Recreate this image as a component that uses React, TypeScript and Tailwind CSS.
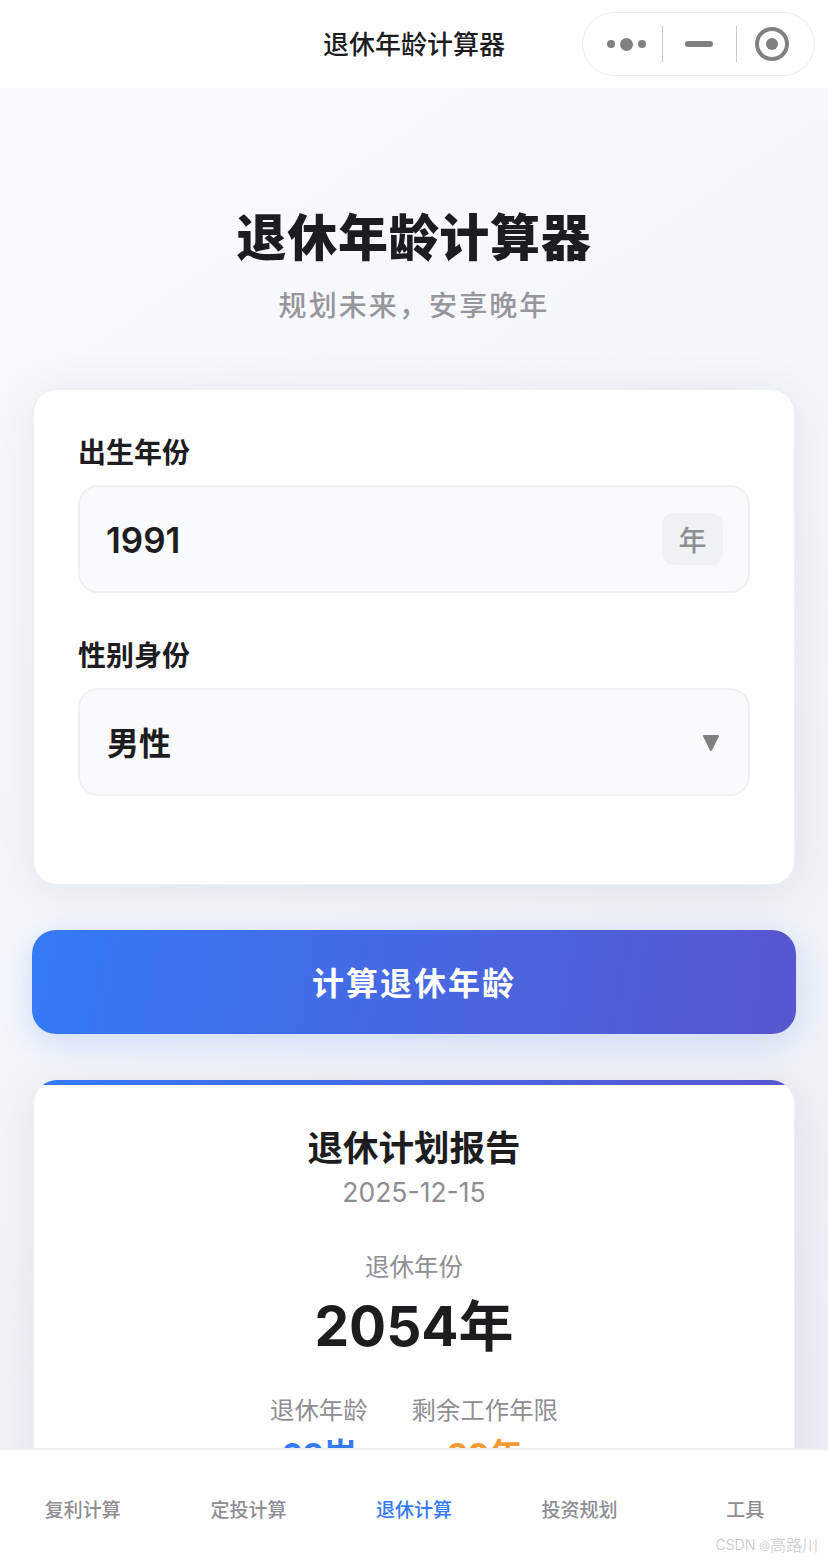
import React from "react";

export default function App() {
  return (
    <div className="h-[1560px] w-[828px] overflow-hidden flex flex-col bg-white font-['Inter','Noto_Sans_CJK_SC',sans-serif] text-[#1d1d1f]">
      <header className="h-[88px] shrink-0 bg-white relative flex items-center justify-center">
        <span className="mt-[2px] text-[26px] leading-[36px] font-medium">退休年龄计算器</span>
        <div className="absolute left-[582px] top-[12px] w-[233px] h-[64px] rounded-full border border-[#ececec] bg-white flex items-center">
          <div className="w-[80px] h-[36px] border-r border-[#c9c9c9] flex items-center justify-center gap-[5px] pl-[8px]">
            <span className="w-[8px] h-[8px] rounded-full bg-[#808080]" />
            <span className="w-[13px] h-[13px] rounded-full bg-[#808080]" />
            <span className="w-[8px] h-[8px] rounded-full bg-[#808080]" />
          </div>
          <div className="w-[74px] h-[36px] border-r border-[#c9c9c9] flex items-center justify-center pr-[2px]">
            <span className="w-[28px] h-[6px] rounded-full bg-[#808080]" />
          </div>
          <div className="flex-1 flex items-center justify-center pr-[7px]">
            <span className="w-[34px] h-[34px] rounded-full border-[4px] border-[#808080] flex items-center justify-center">
              <span className="w-[12px] h-[12px] rounded-full bg-[#808080]" />
            </span>
          </div>
        </div>
      </header>

      <main className="flex-1 min-h-0 overflow-hidden bg-[linear-gradient(145deg,#f9fafc_0%,#f4f6fa_45%,#eceff4_100%)] px-[32px]">
        <div className="pt-[120px] text-center">
          <h1 className="text-[50px] leading-[60px] font-extrabold tracking-[0.7px]">退休年龄计算器</h1>
          <p className="mt-[20px] text-[28px] leading-[36px] font-medium text-[#96969b] tracking-[2.1px]">规划未来，安享晚年</p>
        </div>

        <section className="mt-[65px] mx-[1px] h-[496px] rounded-[24px] bg-white border border-[#eeeff2] shadow-[0_6px_48px_rgba(30,50,90,0.09)] px-[44px] pt-[45px]">
          <div className="text-[28px] leading-[36px] font-semibold">出生年份</div>
          <div className="mt-[14px] h-[108px] rounded-[20px] bg-[#f9fafb] border-2 border-[#eef0f2] flex items-center justify-between pl-[26px] pr-[25px]">
            <span className="mt-[2px] text-[35px] font-semibold">1991</span>
            <span className="w-[61px] h-[52px] rounded-[12px] bg-[#f0f1f3] text-[#8e8e93] text-[28px] font-medium flex items-center justify-center pt-[4px]">年</span>
          </div>
          <div className="mt-[45px] text-[28px] leading-[36px] font-semibold">性别身份</div>
          <div className="mt-[14px] h-[108px] rounded-[20px] bg-[#f9fafb] border-2 border-[#eef0f2] flex items-center justify-between pl-[27px] pr-[28px]">
            <span className="mt-[3px] text-[32px] font-semibold">男性</span>
            <svg width="18" height="18" viewBox="0 0 18 18" className="mt-[2px]"><path d="M2 2h14L9 16z" fill="#808080" stroke="#808080" strokeWidth="2" strokeLinejoin="round" /></svg>
          </div>
        </section>

        <button className="mt-[45px] w-[764px] h-[104px] rounded-[24px] bg-[linear-gradient(100deg,#347af6_0%,#5856cf_100%)] text-white text-[32px] font-bold tracking-[2px] shadow-[0_8px_32px_rgba(52,122,246,0.2)] flex items-center justify-center pt-[4px]">计算退休年龄</button>

        <section className="mt-[46px] mx-[1px] rounded-[24px] overflow-hidden bg-white shadow-[0_6px_48px_rgba(30,50,90,0.09)] border-x border-[#eeeff2] text-center h-[500px]">
          <div className="h-[5px] bg-[linear-gradient(100deg,#347af6_0%,#5856cf_100%)]" />
          <h2 className="mt-[42px] text-[35.5px] leading-[44px] font-bold">退休计划报告</h2>
          <p className="mt-[3px] text-[26.5px] leading-[36px] text-[#8e8e93]">2025-12-15</p>
          <p className="mt-[39px] text-[24.5px] leading-[36px] text-[#8e8e93]">退休年份</p>
          <p className="mt-[5px] text-[55px] leading-[72px] font-bold">2054年</p>
          <div className="mt-[30px] flex justify-center gap-[44px]">
            <div>
              <p className="text-[24.4px] leading-[36px] text-[#8e8e93]">退休年龄</p>
              <p className="mt-[3px] text-[33px] leading-[48px] font-bold text-[#347af6]">63岁</p>
            </div>
            <div>
              <p className="text-[24.4px] leading-[36px] text-[#8e8e93]">剩余工作年限</p>
              <p className="mt-[3px] text-[33px] leading-[48px] font-bold text-[#f39a34]">29年</p>
            </div>
          </div>
        </section>
      </main>

      <nav className="relative h-[112px] shrink-0 bg-white border-t-2 border-[#f0f0f0] grid grid-cols-5 items-center pt-[12px]">
        {["复利计算", "定投计算", "退休计算", "投资规划", "工具"].map((t, i) => (
          <span key={t} className={`text-center text-[19px] font-medium ${i === 2 ? "text-[#347af6]" : "text-[#8e8e93]"}`}>{t}</span>
        ))}
        <span className="absolute right-[10px] bottom-[5px] leading-[20px] font-light text-[#c4c4c4] flex items-center">
          <span className="text-[14px]">CSDN</span>
          <span className="text-[11px] ml-[4px]">@</span>
          <span className="text-[16px]">高路川</span>
        </span>
      </nav>
    </div>
  );
}
